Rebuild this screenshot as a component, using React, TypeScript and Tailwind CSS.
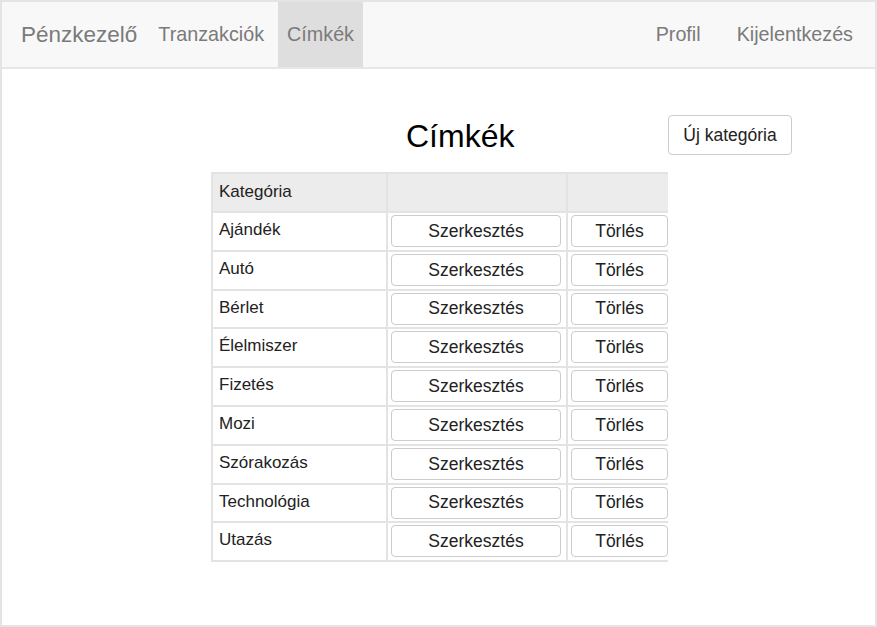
import React from "react";

const categories = [
  "Ajándék",
  "Autó",
  "Bérlet",
  "Élelmiszer",
  "Fizetés",
  "Mozi",
  "Szórakozás",
  "Technológia",
  "Utazás",
];

const cell = "border-l-2 border-t-2 border-[#e3e3e3]";
const btn =
  "h-[32px] mt-[2px] ml-[3px] rounded-[4px] border border-[#cccccc] bg-white text-[17.5px] text-[#222] flex items-center justify-center";

const App: React.FC = () => {
  return (
    <div
      className="w-[877px] h-[627px] border-2 border-[#e4e4e4] bg-white overflow-hidden"
      style={{ fontFamily: '"Liberation Sans", Arial, sans-serif' }}
    >
      <nav className="h-[67px] bg-[#f8f8f8] border-b-2 border-[#e7e7e7] flex items-stretch text-[#7a7a7a]">
        <div className="pl-[19px] pr-[12px] flex items-center text-[22.5px]">Pénzkezelő</div>
        <div className="flex items-stretch text-[19.75px]">
          <a className="px-[9px] flex items-center">Tranzakciók</a>
          <a className="ml-[5px] px-[9px] flex items-center bg-[#dedede]">Címkék</a>
        </div>
        <div className="ml-auto flex items-stretch text-[19.75px] pr-[4px]">
          <a className="px-[18px] flex items-center">Profil</a>
          <a className="px-[18px] flex items-center">Kijelentkezés</a>
        </div>
      </nav>

      <div className="ml-[209px] mt-[46px] w-[581px] h-[40px] flex items-center">
        <h1 className="pl-[195px] text-[32px] text-black leading-none pt-[1px]">Címkék</h1>
        <button className="ml-auto w-[124px] h-[40px] rounded-[4px] border border-[#cccccc] bg-white text-[17.5px] text-[#222]">
          Új kategória
        </button>
      </div>

      <div className="ml-[209px] mt-[17px] w-[457px] text-[17px] text-[#222]">
        <div className="grid grid-cols-[175px_180px_102px] h-[39px] bg-[#ececec]">
          <div className={`${cell} pl-[6px] pt-[5px]`}>Kategória</div>
          <div className={cell}></div>
          <div className={cell}></div>
        </div>
        {categories.map((c, i) => (
          <div
            key={c}
            className={`grid grid-cols-[175px_180px_102px] ${
              i === categories.length - 1 ? "border-b-2 border-[#e3e3e3] h-[40.8px]" : "h-[38.8px]"
            }`}
          >
            <div className={`${cell} pl-[6px] pt-[4px]`}>{c}</div>
            <div className={cell}>
              <div className={`${btn} w-[170px]`}>Szerkesztés</div>
            </div>
            <div className={cell}>
              <div className={`${btn} w-[97px]`}>Törlés</div>
            </div>
          </div>
        ))}
      </div>
    </div>
  );
};

export default App;
